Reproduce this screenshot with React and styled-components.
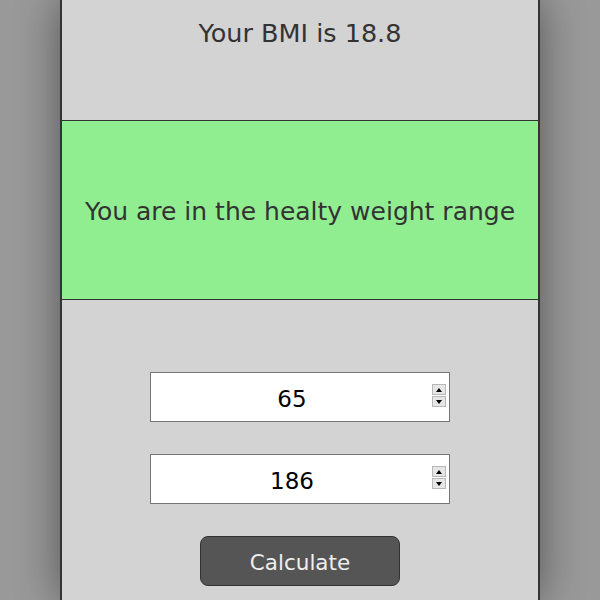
import React, { useState } from "react";
import styled, { createGlobalStyle } from "styled-components";

const Global = createGlobalStyle`
  html, body { margin: 0; padding: 0; }
  body {
    background: #999999;
    font-family: Tahoma, "DejaVu Sans", sans-serif;
    overflow: hidden;
  }
  input::-webkit-outer-spin-button,
  input::-webkit-inner-spin-button { -webkit-appearance: none; margin: 0; }
  input[type=number] { -moz-appearance: textfield; }
`;

const Page = styled.div`
  display: flex;
  justify-content: center;
  min-height: 600px;
`;

const Panel = styled.main`
  box-sizing: border-box;
  width: 480px;
  min-height: 600px;
  background: #d3d3d3;
  border-left: 2px solid #333;
  border-right: 2px solid #333;
  box-shadow: 0 0 40px rgba(0, 0, 0, 0.45);
  display: flex;
  flex-direction: column;
`;

const Title = styled.h1`
  margin: 0;
  height: 120px;
  box-sizing: border-box;
  padding-top: 17px;
  font-size: 25.5px;
  line-height: 32px;
  font-weight: normal;
  color: #333;
  text-align: center;
`;

const Band = styled.section`
  height: 180px;
  box-sizing: border-box;
  padding-top: 3px;
  border-top: 1px solid #333;
  border-bottom: 1px solid #333;
  background: ${(p) => p.$color};
  display: flex;
  align-items: center;
  justify-content: center;
  font-size: 25px;
  color: #333;
`;

const Form = styled.form`
  display: flex;
  flex-direction: column;
  align-items: center;
  gap: 32px;
  padding-top: 72px;
`;

const Field = styled.div`
  position: relative;
  width: 300px;
  height: 50px;
`;

const NumberInput = styled.input`
  box-sizing: border-box;
  width: 100%;
  height: 100%;
  border: 1px solid #767676;
  background: #fff;
  font-family: inherit;
  font-size: 23px;
  color: #000;
  text-align: center;
  outline: none;
  padding: 3px 16px 0 0;
`;

const Spinner = styled.div`
  position: absolute;
  right: 4px;
  top: 12px;
  width: 14px;
  display: flex;
  flex-direction: column;
  gap: 1px;
`;

const SpinBtn = styled.div`
  box-sizing: border-box;
  height: 11px;
  border: 1px solid #b8b8b8;
  background: #e6e6e6;
  display: flex;
  align-items: center;
  justify-content: center;
  &::after {
    content: "";
    border-left: 3.5px solid transparent;
    border-right: 3.5px solid transparent;
    ${(p) =>
      p.$up ? "border-bottom: 4px solid #000;" : "border-top: 4px solid #000;"}
  }
`;

const Button = styled.button`
  box-sizing: border-box;
  width: 200px;
  height: 50px;
  padding: 3px 0 0;
  border: 1px solid #333;
  border-radius: 8px;
  background: #555;
  color: #eee;
  font-family: inherit;
  font-size: 21.5px;
  cursor: pointer;
`;

function NumberField({ value, onChange }) {
  return (
    <Field>
      <NumberInput type="number" value={value} onChange={(e) => onChange(e.target.value)} />
      <Spinner>
        <SpinBtn $up />
        <SpinBtn />
      </Spinner>
    </Field>
  );
}

export default function App() {
  const [weight, setWeight] = useState("65");
  const [height, setHeight] = useState("186");
  return (
    <Page>
      <Global />
      <Panel>
        <Title>Your BMI is 18.8</Title>
        <Band $color="#90ee90">You are in the healty weight range</Band>
        <Form onSubmit={(e) => e.preventDefault()}>
          <NumberField value={weight} onChange={setWeight} />
          <NumberField value={height} onChange={setHeight} />
          <Button type="submit">Calculate</Button>
        </Form>
      </Panel>
    </Page>
  );
}
